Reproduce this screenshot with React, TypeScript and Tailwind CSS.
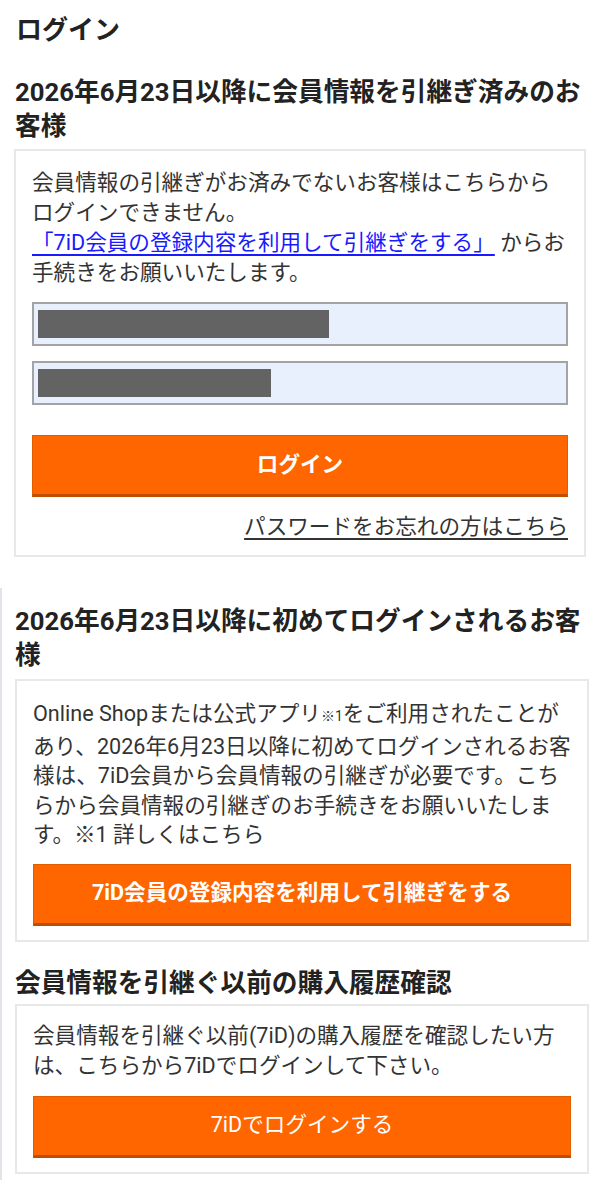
const font = { fontFamily: 'Roboto, "Noto Sans CJK JP", sans-serif' };

const Redacted = ({ width }: { width: string }) => (
  <div className="h-[44px] w-full border-2 border-[#a3a3a3] bg-[#e8f0fe] pl-[4px] pt-[6px]">
    <div className={`h-[28px] ${width} bg-[#636363]`} />
  </div>
);

const OrangeButton = ({ label, bold = true }: { label: string; bold?: boolean }) => (
  <button
    className={`flex h-[62px] w-full items-center justify-center border border-[#e05d00] border-b-[3px] border-b-[#c04e00] bg-[#ff6600] text-[21.6px] text-white ${
      bold ? 'font-bold' : 'font-normal'
    }`}
  >
    {label}
  </button>
);

export default function App() {
  return (
    <div className="min-h-[1200px] bg-white text-[#333]" style={font}>
      <div className="px-[14px] pt-[10px]">
        <h1 className="pl-[2px] text-[26px] font-bold leading-[40px] text-[#222]">ログイン</h1>

        <h2 className="mt-[25px] mb-[6px] pl-[1px] text-[25.7px] font-bold leading-[34px] text-[#222]">
          2026年6月23日以降に会員情報を引継ぎ済みのお客様
        </h2>

        <div className="border-2 border-[#e8e8e8] px-[16px] pt-[17px] pb-[13px]">
          <p className="whitespace-nowrap text-[21.6px] leading-[30px]">
            会員情報の引継ぎがお済みでないお客様はこちらから
            <br />
            ログインできません。
            <br />
            <a href="#" className="text-[#1a1aff] underline underline-offset-[4px]">
              「7iD会員の登録内容を利用して引継ぎをする」
            </a>{' '}
            からお
            <br />
            手続きをお願いいたします。
          </p>

          <div className="mt-[14px] flex flex-col gap-[15px]">
            <Redacted width="w-[291px]" />
            <Redacted width="w-[233px]" />
          </div>

          <div className="mt-[30px]">
            <OrangeButton label="ログイン" />
          </div>

          <div className="mt-[15px] text-right text-[21.6px] leading-[30px]">
            <a href="#" className="text-[#333] underline underline-offset-[4px]">
              パスワードをお忘れの方はこちら
            </a>
          </div>
        </div>
      </div>

      <div className="mt-[31px] border-l-2 border-[#e1e5ea] pl-[13px] pr-[11px] pt-[16px] pb-[6px]">
        <h2 className="mb-[7px] text-[25.7px] font-bold leading-[34px] text-[#222]">
          2026年6月23日以降に初めてログインされるお客様
        </h2>

        <div className="border-2 border-[#e8e8e8] px-[16px] pt-[18px] pb-[14px]">
          <p className="whitespace-nowrap text-[21.6px] leading-[29.5px]">
            Online Shopまたは公式アプリ<span className="text-[14px]">※1</span>をご利用されたことが
            <br />
            あり、2026年6月23日以降に初めてログインされるお客
            <br />
            様は、7iD会員から会員情報の引継ぎが必要です。こち
            <br />
            らから会員情報の引継ぎのお手続きをお願いいたしま
            <br />
            す。※1 詳しくはこちら
          </p>
          <div className="mt-[14px]">
            <OrangeButton label="7iD会員の登録内容を利用して引継ぎをする" />
          </div>
        </div>

        <h2 className="mt-[24px] mb-[4px] text-[25.7px] font-bold leading-[34px] text-[#222]">
          会員情報を引継ぐ以前の購入履歴確認
        </h2>

        <div className="border-2 border-[#e8e8e8] px-[16px] pt-[15px] pb-[14px]">
          <p className="whitespace-nowrap text-[21.6px] leading-[30px]">
            会員情報を引継ぐ以前(7iD)の購入履歴を確認したい方
            <br />
            は、こちらから7iDでログインして下さい。
          </p>
          <div className="mt-[15px]">
            <OrangeButton label="7iDでログインする" bold={false} />
          </div>
        </div>
      </div>
    </div>
  );
}
